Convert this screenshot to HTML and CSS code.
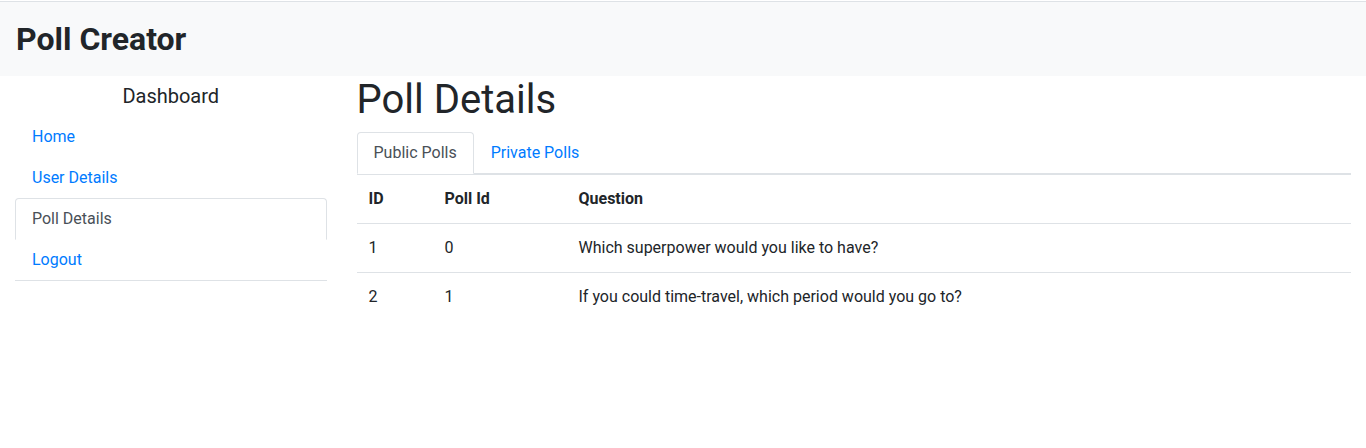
FILE: index.html
```html
<!DOCTYPE html>
<html lang="en">
<head>
<meta charset="utf-8">
<title>Poll Creator</title>
<link rel="stylesheet" href="styles.css">
</head>
<body>
<header class="topbar">
  <h2 class="brand">Poll Creator</h2>
</header>
<div class="layout">
  <aside class="sidebar">
    <h5 class="side-title">Dashboard</h5>
    <ul class="side-nav">
      <li><a class="side-link" href="#">Home</a></li>
      <li><a class="side-link" href="#">User Details</a></li>
      <li><a class="side-link active" href="#">Poll Details</a></li>
      <li><a class="side-link" href="#">Logout</a></li>
    </ul>
  </aside>
  <main class="main">
    <h1 class="page-title">Poll Details</h1>
    <ul class="tabs">
      <li><a class="tab active" href="#">Public Polls</a></li>
      <li><a class="tab" href="#">Private Polls</a></li>
    </ul>
    <table class="polls">
      <thead>
        <tr><th class="c-id">ID</th><th class="c-poll">Poll Id</th><th>Question</th></tr>
      </thead>
      <tbody>
        <tr><td>1</td><td>0</td><td>Which superpower would you like to have?</td></tr>
        <tr><td>2</td><td>1</td><td>If you could time-travel, which period would you go to?</td></tr>
      </tbody>
    </table>
  </main>
</div>
</body>
</html>
```

FILE: styles.css
```css
* { box-sizing: border-box; }
html, body { margin: 0; padding: 0; }
body {
  font-family: Roboto, "Liberation Sans", sans-serif;
  font-size: 16px;
  line-height: 1.5;
  color: #212529;
  background: #fff;
}
a { text-decoration: none; }
ul { list-style: none; margin: 0; padding: 0; }

.topbar {
  margin-top: 1px;
  border-top: 1px solid #dee2e6;
  background: #f8f9fa;
  padding: 18px 16px 18px;
}
.brand {
  margin: 0;
  font-size: 32px;
  font-weight: 700;
  line-height: 38px;
}

.layout {
  display: grid;
  grid-template-columns: 25% 75%;
  padding: 0;
}
.sidebar { padding: 8px 15px 0; }
.side-title {
  margin: 0 0 8px;
  font-size: 20px;
  font-weight: 400;
  line-height: 24px;
  text-align: center;
}
.side-nav {
  display: flex;
  flex-direction: column;
  border-bottom: 1px solid #dee2e6;
}
.side-link {
  display: block;
  padding: 8px 16px;
  margin-bottom: -1px;
  border: 1px solid transparent;
  border-top-left-radius: 4px;
  border-top-right-radius: 4px;
  color: #007bff;
  line-height: 24px;
}
.side-link.active {
  color: #495057;
  background: #fff;
  border-color: #dee2e6 #dee2e6 #fff;
}

.main { padding: 0 15px; }
.page-title {
  margin: 0 0 8px;
  font-size: 40px;
  font-weight: 400;
  line-height: 48px;
}
.tabs {
  display: flex;
  border-bottom: 1px solid #dee2e6;
}
.tab {
  display: block;
  padding: 8px 16px;
  margin-bottom: -1px;
  border: 1px solid transparent;
  border-top-left-radius: 4px;
  border-top-right-radius: 4px;
  color: #007bff;
  line-height: 24px;
}
.tab.active {
  color: #495057;
  background: #fff;
  border-color: #dee2e6 #dee2e6 #fff;
}

.polls {
  width: 100%;
  border-collapse: collapse;
}
.polls th, .polls td {
  padding: 12px;
  text-align: left;
  vertical-align: top;
  border-top: 1px solid #dee2e6;
  line-height: 24px;
}
.polls th { font-weight: 700; }
.c-id { width: 76px; }
.c-poll { width: 134px; }
```
